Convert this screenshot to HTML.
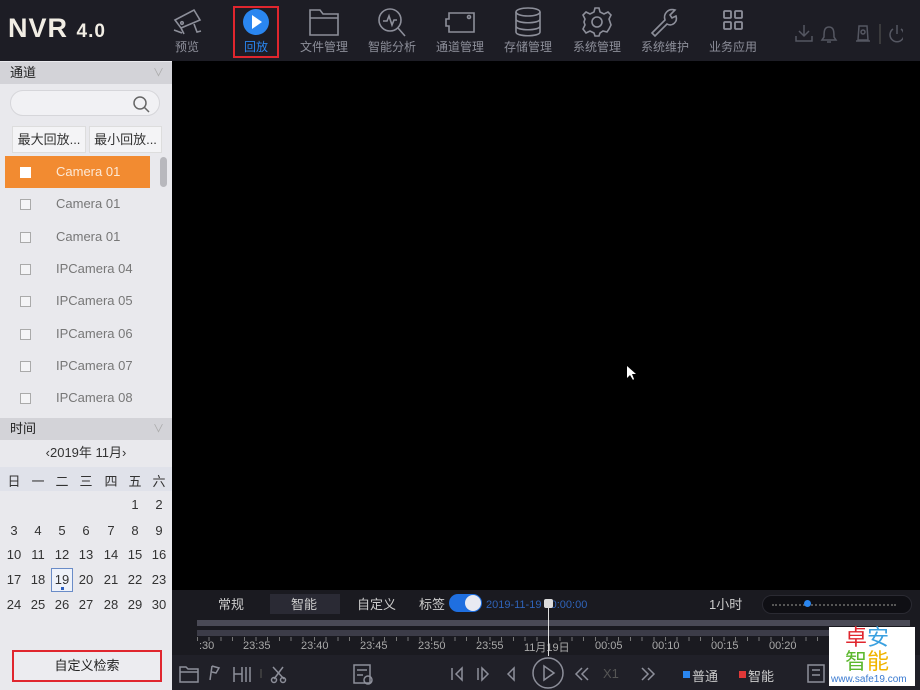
<!DOCTYPE html>
<html><head><meta charset="utf-8"><style>
*{margin:0;padding:0;box-sizing:border-box}
body{width:920px;height:690px;overflow:hidden;background:#000;font-family:"Liberation Sans","Noto Sans CJK SC",sans-serif;position:relative}
.a{position:absolute}
#hdr{left:0;top:0;width:920px;height:61px;background:#1d1d25}
.nv{position:absolute;top:38px;font-size:12px;color:#8d8f9a;width:70px;text-align:center;margin-left:-35px}
.ic{position:absolute;top:6px;width:34px;height:32px;margin-left:-17px}
#left{left:0;top:61px;width:172px;height:629px;background:#e9e9ed}
.hd{position:absolute;left:0;width:172px;height:22px;background:#d3d3d8;font-size:13px;color:#222;padding-left:10px;line-height:22px}
.hd i{position:absolute;right:8px;top:0;font-style:normal;color:#aaa;font-size:11px}
.row{position:absolute;left:5px;width:145px;height:32px;font-size:13px;color:#777;line-height:32px}
.row b{position:absolute;left:15px;top:11px;width:11px;height:11px;border:1px solid #aaa;background:#f4f4f6}
.row span{position:absolute;left:51px}
.cal{position:absolute;width:24px;text-align:center;font-size:13px;color:#333}
.bl{font-size:12px;color:#ccc}
</style></head><body>
<div id="hdr" class="a">
 <div class="a" style="left:8px;top:13px;font-size:27px;font-weight:bold;color:#f1ede4;letter-spacing:1px">NVR <span style="font-size:19px">4.0</span></div>
 <div class="a" style="left:233px;top:6px;width:46px;height:52px;border:2px solid #e0262e"></div>
 <svg class="ic" style="left:187px" viewBox="0 0 34 32" fill="none" stroke="#8d8f9a" stroke-width="1.6"><path d="M5 14 L24 4 L30 14 L11 22 Z M11 22 L14 28 M4 24 L12 27 M24 18 L27 26 L31 25"/><circle cx="12" cy="17" r="1.3"/></svg>
 <div class="nv" style="left:187px">预览</div>
 <svg class="ic" style="left:256px" viewBox="0 0 34 32"><circle cx="17" cy="16" r="13" fill="#2a86f0"/><path d="M13 9 L23 16 L13 23 Z" fill="#fff"/></svg>
 <div class="nv" style="left:256px;color:#2a86f0">回放</div>
 <svg class="ic" style="left:324px" viewBox="0 0 34 32" fill="none" stroke="#8d8f9a" stroke-width="1.6"><path d="M3 4 H13 L16 8 H31 V29 H3 Z M3 12 H31"/></svg>
 <div class="nv" style="left:324px">文件管理</div>
 <svg class="ic" style="left:392px" viewBox="0 0 34 32" fill="none" stroke="#8d8f9a" stroke-width="1.6"><circle cx="15" cy="14" r="11"/><path d="M23 22 L30 30 M8 15 H12 L14 10 L17 19 L19 14 H22"/></svg>
 <div class="nv" style="left:392px">智能分析</div>
 <svg class="ic" style="left:460px" viewBox="0 0 34 32" fill="none" stroke="#8d8f9a" stroke-width="1.6"><path d="M6 7 H31 V26 H6 V20 H3 V13 H6 Z"/><circle cx="26" cy="11" r="1.5"/></svg>
 <div class="nv" style="left:460px">通道管理</div>
 <svg class="ic" style="left:528px" viewBox="0 0 34 32" fill="none" stroke="#8d8f9a" stroke-width="1.6"><ellipse cx="17" cy="6" rx="12" ry="4"/><path d="M5 6 V26 C5 31 29 31 29 26 V6 M5 13 C5 18 29 18 29 13 M5 20 C5 25 29 25 29 20"/></svg>
 <div class="nv" style="left:528px">存储管理</div>
 <svg class="ic" style="left:597px" viewBox="0 0 34 32" fill="none" stroke="#8d8f9a" stroke-width="1.6"><circle cx="17" cy="16" r="5"/><path d="M15 2 H19 L20 6 L24 8 L28 6 L31 9 L29 13 L30 16 L31 19 L29 23 L27 26 L23 25 L20 27 L19 30 H15 L14 27 L10 25 L6 27 L3 23 L5 19 L4 16 L5 13 L3 9 L6 6 L10 8 L14 6 Z"/></svg>
 <div class="nv" style="left:597px">系统管理</div>
 <svg class="ic" style="left:665px" viewBox="0 0 34 32" fill="none" stroke="#8d8f9a" stroke-width="1.6"><path d="M4 27 L17 14 C15 8 20 2 27 4 L22 9 L24 12 L28 10 C30 16 24 21 19 18 L7 30 Z"/></svg>
 <div class="nv" style="left:665px">系统维护</div>
 <svg class="ic" style="left:733px" viewBox="0 0 34 32" fill="none" stroke="#8d8f9a" stroke-width="1.8"><rect x="8" y="5" width="7" height="7" rx="1"/><rect x="19" y="5" width="7" height="7" rx="1"/><rect x="8" y="16" width="7" height="7" rx="1"/><rect x="19" y="16" width="7" height="7" rx="1"/></svg>
 <div class="nv" style="left:733px">业务应用</div>
 <svg class="a" style="left:793px;top:22px" width="110" height="24" viewBox="0 0 110 24" fill="none" stroke="#555762" stroke-width="1.5"><path d="M11 3 V14 M6 9 L11 14 L16 9 M3 14 V19 H19 V14"/><path d="M36 5 C31 5 31 10 31 15 L29 18 H43 L41 15 C41 10 41 5 36 5 M34 20 H38"/><path d="M66 4 H74 L75 18 H65 Z M63 19 H77"/><circle cx="70" cy="10" r="2"/><path d="M87 2 V22" stroke="#444"/><path d="M108 7 A7 7 0 1 1 100 7 M104 3 V12"/></svg>
</div>

<div id="left" class="a">
 <div class="hd" style="top:1px">通道<i>∨</i></div>
 <div class="a" style="left:10px;top:29px;width:150px;height:26px;border:1px solid #d6d6da;border-radius:13px;background:#f1f1f4"></div>
 <svg class="a" style="left:132px;top:34px" width="18" height="18" fill="none" stroke="#666" stroke-width="1.5"><circle cx="8" cy="8" r="6"/><path d="M12 12 L17 17"/></svg>
 <div class="a" style="left:12px;top:65px;width:74px;height:27px;background:#f4f4f6;border:1px solid #ddd;font-size:13px;color:#333;line-height:25px;text-align:center">最大回放...</div>
 <div class="a" style="left:89px;top:65px;width:73px;height:27px;background:#f4f4f6;border:1px solid #ddd;font-size:13px;color:#333;line-height:25px;text-align:center">最小回放...</div>
 <div class="row" style="top:95px;background:#f28b31;color:#fde9d6"><b style="background:#fff;border-color:#fff"></b><span>Camera 01</span></div>
 <div class="a" style="left:160px;top:96px;width:7px;height:30px;background:#b8b8bd;border-radius:4px"></div>
 <div class="row" style="top:127px"><b></b><span>Camera 01</span></div>
 <div class="row" style="top:160px"><b></b><span>Camera 01</span></div>
 <div class="row" style="top:192px"><b></b><span>IPCamera 04</span></div>
 <div class="row" style="top:224px"><b></b><span>IPCamera 05</span></div>
 <div class="row" style="top:257px"><b></b><span>IPCamera 06</span></div>
 <div class="row" style="top:289px"><b></b><span>IPCamera 07</span></div>
 <div class="row" style="top:321px"><b></b><span>IPCamera 08</span></div>
 <div class="hd" style="top:357px">时间<i>∨</i></div>
 <div class="a" style="left:0;top:381px;width:172px;text-align:center;font-size:13px;color:#333">‹2019年 11月›</div>
 <div class="a" style="left:0;top:406px;width:172px;height:24px;background:#e0e2ea"></div>
 <div class="a" style="left:51px;top:507px;width:22px;height:24px;border:1px solid #6a8cc8;background:#eef2fa"></div>
 <div class="a" style="left:61px;top:526px;width:3px;height:3px;background:#2a5ec0"></div>
 <div id="cal"></div>
 <div class="a" style="left:12px;top:589px;width:150px;height:32px;border:2px solid #e0262e;background:#ececf0;font-size:13px;color:#222;line-height:28px;text-align:center">自定义检索</div>
</div>

<div class="a" style="left:172px;top:590px;width:748px;height:100px;background:#1a1a20"></div>
<div class="a" style="left:172px;top:655px;width:748px;height:35px;background:#202028"></div>
<div class="a" style="left:270px;top:594px;width:70px;height:20px;background:#2a2a34"></div>
<div class="a bl" style="left:218px;top:594px;font-size:13px">常规</div>
<div class="a bl" style="left:291px;top:594px;font-size:13px">智能</div>
<div class="a bl" style="left:357px;top:594px;font-size:13px">自定义</div>
<div class="a bl" style="left:419px;top:594px;font-size:13px">标签</div>
<div class="a" style="left:449px;top:594px;width:33px;height:18px;border-radius:9px;background:#1f6fe0"></div>
<div class="a" style="left:465px;top:595px;width:16px;height:16px;border-radius:8px;background:#e8eaf2"></div>
<div class="a" style="left:486px;top:599px;font-size:11px;color:#2f63b8">2019-11-19 00:00:00</div>
<div class="a bl" style="left:709px;top:594px;font-size:13px">1小时</div>
<div class="a" style="left:762px;top:595px;width:150px;height:19px;border-radius:10px;background:#0f0f14;border:1px solid #2a2a32"></div>
<div class="a" style="left:772px;top:604px;width:124px;height:1px;border-top:2px dotted #555"></div>
<div class="a" style="left:804px;top:600px;width:7px;height:7px;border-radius:4px;background:#2a86f0"></div>
<div class="a" style="left:197px;top:620px;width:713px;height:6px;background:#4a4a56"></div>
<div class="a" style="left:197px;top:630px;width:713px;height:6px;background:#3c3c48"></div>
<div class="a" style="left:197px;top:637px;width:713px;height:4px;background:repeating-linear-gradient(90deg,#777 0 1px,transparent 1px 11.7px)"></div>
<div class="a" style="left:172px;top:640px;width:748px;font-size:11px;color:#aaa;white-space:nowrap">
<span class="a" style="left:27px">:30</span><span class="a" style="left:71px">23:35</span><span class="a" style="left:129px">23:40</span><span class="a" style="left:188px">23:45</span><span class="a" style="left:246px">23:50</span><span class="a" style="left:304px">23:55</span><span class="a" style="left:352px;top:-1px">11月19日</span><span class="a" style="left:423px">00:05</span><span class="a" style="left:480px">00:10</span><span class="a" style="left:539px">00:15</span><span class="a" style="left:597px">00:20</span></div>
<div class="a" style="left:548px;top:604px;width:1px;height:52px;background:#ddd"></div>
<div class="a" style="left:544px;top:599px;width:9px;height:9px;background:#ddd;border-radius:2px"></div>

<svg class="a" style="left:172px;top:656px" width="748" height="34" fill="none" stroke="#8d8f9a" stroke-width="1.5">
 <path d="M8 11 H14 L16 13 H26 V26 H8 Z M8 16 H26"/>
 <path d="M38 24 L40 10 M40 10 L47 12 L44 17 L40 16"/>
 <path d="M62 11 V26 M70 11 V26 M62 18 H70 M74 11 V26 M78 11 V26"/>
 <path d="M89 13 V22" stroke="#444"/>
 <path d="M101 11 L112 23 M111 11 L102 23"/><circle cx="102" cy="24" r="2.5"/><circle cx="111" cy="24" r="2.5"/>
 <rect x="182" y="9" width="16" height="18"/><path d="M185 14 H195 M185 19 H191"/><circle cx="196" cy="24" r="4"/>
 <path d="M280 12 V24 M290 12 L284 18 L290 24 Z"/>
 <path d="M306 12 V24 M310 12 L316 18 L310 24 Z"/>
 <path d="M342 12 L336 18 L342 24 Z"/>
 <circle cx="376" cy="17" r="15"/><path d="M372 10 L382 17 L372 24 Z"/>
 <path d="M410 12 L404 18 L410 24 M416 12 L410 18 L416 24"/>
 <path d="M470 12 L476 18 L470 24 M476 12 L482 18 L476 24"/>
 <rect x="636" y="9" width="16" height="17"/><path d="M640 14 H648 M640 19 H648"/>
</svg>
<div class="a" style="left:603px;top:666px;font-size:13px;color:#555">X1</div>
<div class="a" style="left:683px;top:671px;width:7px;height:7px;background:#2a86f0"></div>
<div class="a bl" style="left:692px;top:666px;font-size:13px">普通</div>
<div class="a" style="left:739px;top:671px;width:7px;height:7px;background:#e03838"></div>
<div class="a bl" style="left:748px;top:666px;font-size:13px">智能</div>

<div class="a" style="left:829px;top:627px;width:86px;height:59px;background:#fff"></div>
<div class="a" style="left:845px;top:626px;font-size:22px;line-height:24px;color:#e0262e">卓<span style="color:#3aa0e0">安</span></div>
<div class="a" style="left:845px;top:650px;font-size:22px;line-height:24px;color:#5cb82e">智<span style="color:#f0b400">能</span></div>
<div class="a" style="left:831px;top:674px;font-size:10px;color:#3a7ad0">www.safe19.com</div>

<svg class="a" style="left:626px;top:365px" width="10" height="16"><path d="M1 1 V13 L4 10 L7 15 L8 14 L6 9 H10 Z" fill="#fff"/></svg>

<script>
var d=[["日","一","二","三","四","五","六"],["","","","","","1","2"],["3","4","5","6","7","8","9"],["10","11","12","13","14","15","16"],["17","18","19","20","21","22","23"],["24","25","26","27","28","29","30"]];
var xs=[14,38,62,86,111,135,159],ys=[410,436,462,486,511,536],h="";
for(var r=0;r<6;r++)for(var c=0;c<7;c++)h+='<div class="cal" style="left:'+(xs[c]-12)+'px;top:'+ys[r]+'px">'+d[r][c]+'</div>';
document.getElementById("cal").innerHTML=h;
</script>
</body></html>
